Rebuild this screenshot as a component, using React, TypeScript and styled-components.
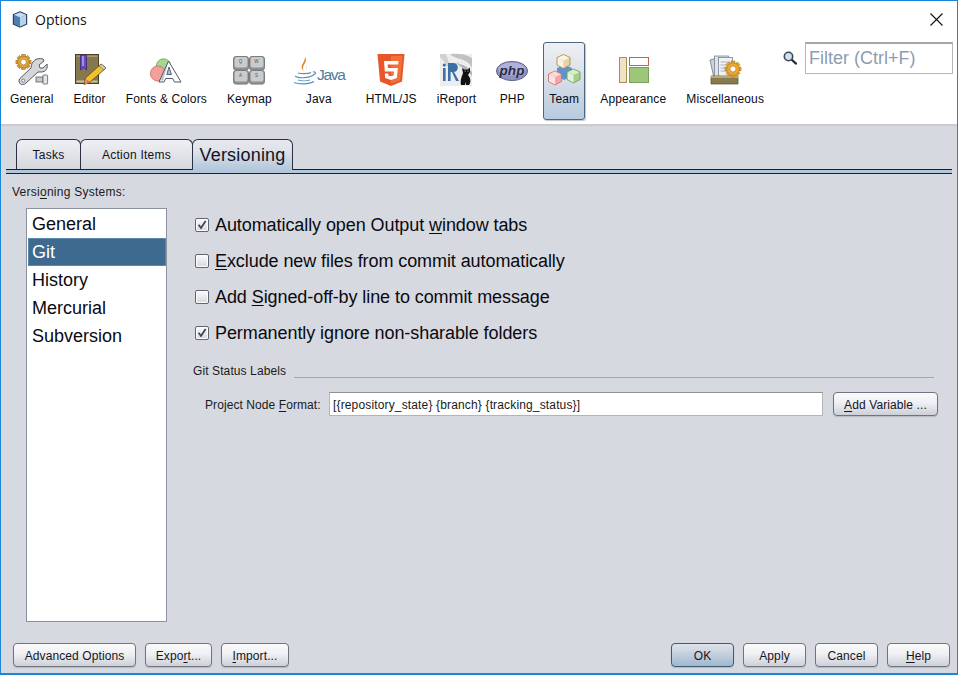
import React from "react";
import styled, { createGlobalStyle } from "styled-components";

const Global = createGlobalStyle`
  html, body { margin: 0; padding: 0; background: #fff; }
  * { box-sizing: border-box; }
`;

const Win = styled.div`
  width: 958px; height: 675px; display: flex; flex-direction: column;
  border: 1px solid #1a86d9; border-width: 1px 1px 2px 1px;
  background: #fff; font-family: "Liberation Sans", Arial, sans-serif; color: #111;
  overflow: hidden;
`;
const TitleBar = styled.div`
  height: 37px; display: flex; align-items: center; padding: 0 14px 0 11px; gap: 7px; flex: none;
`;
const TitleText = styled.div`
  font-family: "Open Sans", sans-serif; font-size: 14px; color: #111; flex: 1; padding-bottom: 1px;
`;
const Toolbar = styled.div`
  height: 88px; display: flex; align-items: flex-start; padding: 4px 4px 0 4px; gap: 10px; flex: none;
  border-bottom: 2px solid #c9cbce;
`;
const ToolItem = styled.div<{ $active?: boolean }>`
  height: 78px; padding: 11px 4px 0; display: flex; flex-direction: column; align-items: center;
  border: 1px solid ${(p) => (p.$active ? "#4c6580" : "transparent")};
  border-radius: 3px; font-size: 12px; letter-spacing: 0.13px; white-space: nowrap;
  background: ${(p) => (p.$active ? "linear-gradient(#eef0f3, #dfe3ea 35%, #b7cbe0)" : "transparent")};
  box-shadow: ${(p) => (p.$active ? "1px 1px 1px #c4c6ca" : "none")};
`;
const IconSlot = styled.div<{ $w?: number }>`
  width: ${(p) => p.$w ?? 32}px; height: 32px; margin-bottom: 6px; display: flex; justify-content: center;
`;
const ToolLabel = styled.div`
  line-height: 14px; color: #0c0c14;
`;
const Filter = styled.div`
  display: flex; align-items: flex-start; gap: 8px; margin-left: auto;
`;
const SearchGlyph = styled.div`padding-top: 9px;`;
const FilterBox = styled.div`
  width: 148px; height: 32px; border: 1px solid #b4b6b8; border-top: 2px solid #a4a6a8;
  font-size: 18px; color: #8d9cb0; line-height: 28px; padding-left: 3px; background: #fff;
  white-space: nowrap;
`;
const Content = styled.div`
  flex: 1; min-height: 0; background: #d6d9e0; display: flex; flex-direction: column;
`;
const TabStrip = styled.div`
  margin: 13px 5px 0 5px; padding-left: 10px; height: 31px; display: flex; align-items: flex-start;
  border-bottom: 1px solid #16203a; flex: none;
`;
const TabRule = styled.div`
  margin: 0 5px 0 5px; height: 4px; background: #b3c7dc; border-bottom: 1px solid #16203a; flex: none;
`;
const Tab = styled.div<{ $active?: boolean; $w: number }>`
  width: ${(p) => p.$w}px; height: ${(p) => (p.$active ? 31 : 30)}px; flex: none;
  display: flex; justify-content: center; align-items: center;
  border: 1px solid #2a3142; border-bottom: none;
  border-radius: 6px 6px 0 0; position: relative; z-index: ${(p) => (p.$active ? 1 : 0)};
  margin-right: ${(p) => (p.$active ? 0 : -1)}px; padding-top: 1px;
  font-size: ${(p) => (p.$active ? 18 : 12)}px;
  letter-spacing: ${(p) => (p.$active ? 0.2 : 0.25)}px;
  color: #11131e;
  background: ${(p) =>
    p.$active ? "linear-gradient(#e6e8ed, #dfe2e8 35%, #b3c7dc 100%)" : "linear-gradient(#eff0f3, #d4d7de)"};
`;
const Body = styled.div`
  flex: 1; min-height: 0; display: flex; flex-direction: column; padding: 11px 7px 0 11px;
`;
const SysLabel = styled.div`
  font-size: 12px; line-height: 14px; color: #1a1a22; letter-spacing: 0.25px;
`;
const Split = styled.div`
  flex: 1; min-height: 0; display: flex; padding-top: 9px;
`;
const ListBox = styled.div`
  width: 141px; height: 414px; margin-left: 14px; flex: none; background: #fff;
  border: 1px solid #8b92a2; padding: 1px 0 1px 1px;
`;
const ListItem = styled.div<{ $sel?: boolean }>`
  height: 28px; padding-left: 4px; font-size: 18px; line-height: 28px;
  color: ${(p) => (p.$sel ? "#fff" : "#0a0a10")};
  background: ${(p) => (p.$sel ? "#3d6a8e" : "transparent")};
  box-shadow: ${(p) => (p.$sel ? "inset 0 0 0 1px #5d88ad" : "none")};
`;
const Settings = styled.div`
  flex: 1; display: flex; flex-direction: column; padding: 0 0 0 26px; margin-top: -1px;
`;
const CheckRow = styled.div`
  height: 36px; display: flex; align-items: center; gap: 6px; font-size: 18px; color: #0a0a10; letter-spacing: -0.08px;
`;
const CheckBox = styled.div`
  width: 14px; height: 14px; border: 1px solid #5f6470; border-radius: 2px; flex: none; margin-left: 2px;
  background: linear-gradient(#fbfbfc, #d5d8de); box-shadow: inset 0 0 0 1px #fff;
  display: flex; align-items: center; justify-content: center;
`;
const Mn = styled.span`
  text-decoration: underline; text-underline-offset: 2px;
`;
const GroupHead = styled.div`
  display: flex; align-items: flex-start; gap: 8px; margin-top: 13px; font-size: 12px; color: #1a1a22;
  line-height: 14px; letter-spacing: 0.1px;
`;
const GroupLine = styled.div`
  flex: 1; height: 1px; background: #a3a7b0; margin: 13px 16px 0 0;
`;
const FormatRow = styled.div`
  display: flex; align-items: center; margin-top: 14px; padding-left: 12px; font-size: 12px;
`;
const FieldLabel = styled.div`
  width: 124px; flex: none; color: #1a1a22; letter-spacing: 0.08px; white-space: nowrap; padding-top: 1px;
`;
const Field = styled.div`
  width: 494px; height: 24px; background: #fff; border: 1px solid #b2b4b6; border-top-color: #8f9193;
  line-height: 24px; padding-left: 3px; color: #1a1a22; letter-spacing: 0.15px; font-size: 12px;
`;
const Btn = styled.div<{ $w: number; $primary?: boolean }>`
  width: ${(p) => p.$w}px; height: 24px; flex: none; display: flex; align-items: center; justify-content: center;
  font-size: 12px; color: #16161e; letter-spacing: 0.1px; padding-top: 1px;
  border: 1px solid ${(p) => (p.$primary ? "#3d5a76" : "#6f7480")}; border-radius: 4px;
  background: ${(p) =>
    p.$primary ? "linear-gradient(#dfe3ea, #c4d0de 45%, #9fb8d0)" : "linear-gradient(#fafafb, #eef0f3 45%, #cdd0d7)"};
  box-shadow: 0 1px 1px #b6b9c0;
`;
const AddBtn = styled(Btn)`margin-left: 10px;`;
const Footer = styled.div`
  height: 30px; flex: none; display: flex; justify-content: space-between; padding: 0 0 0 1px;
`;
const BtnGroup = styled.div`
  display: flex; gap: 9px;
`;

const Cube = ({ x, y, c, d, l }: { x: number; y: number; c: string; d: string; l: string }) => (
  <g transform={`translate(${x} ${y})`}>
    <path d="M6.5 0 L13 3 L13 10.5 L6.5 14 L0 10.5 L0 3 Z" fill={c} stroke={d} strokeWidth="0.9" />
    <path d="M6.5 .6 L12.4 3.2 L6.5 6 L.6 3.2 Z" fill={l} />
    <path d="M.6 3.4 L6.5 6.2 L6.5 13.4 L.6 10.2 Z" fill="#fff" opacity="0.7" />
  </g>
);

const GearPath = ({ cx, cy, r, fill, stroke }: { cx: number; cy: number; r: number; fill: string; stroke: string }) => (
  <g>
    {[0, 45, 90, 135].map((a) => (
      <rect key={a} x={cx - r * 0.28} y={cy - r * 1.18} width={r * 0.56} height={r * 2.36} fill={fill} stroke={stroke} strokeWidth="0.5" transform={`rotate(${a} ${cx} ${cy})`} />
    ))}
    <circle cx={cx} cy={cy} r={r * 0.92} fill={fill} stroke={stroke} strokeWidth="0.6" />
    <circle cx={cx} cy={cy} r={r * 0.45} fill="#fff" stroke={stroke} strokeWidth="0.6" />
  </g>
);

const Svg32 = styled.svg`width: 32px; height: 32px; display: block; overflow: visible;`;
const SvgOptions = styled.svg`display: block; flex: none;`;
const SvgJava = styled.svg`display: block; overflow: visible;`;
const SvgSearch = styled.svg`display: block;`;

const IconOptions = () => (
  <SvgOptions width="16" height="17" viewBox="0 0 16 17">
    <path d="M8 .8 L14.6 3.6 V13 L8 16.2 L1.4 13 V3.6 Z" fill="#6f9fcf" stroke="#31425c" strokeWidth="1.2" />
    <path d="M8 1.6 L14 3.8 L8 6.4 L2 3.8 Z" fill="#c6dcf1" />
    <path d="M8 6.6 L14 4 V12.7 L8 15.4 Z" fill="#b8d2ea" />
    <path d="M8 6.6 L2 4 V12.7 L8 15.4 Z" fill="#4b7fb5" />
  </SvgOptions>
);
const IconClose = () => (
  <svg width="13" height="13" viewBox="0 0 13 13"><path d="M.5 .5 L12.5 12.5 M12.5 .5 L.5 12.5" stroke="#111" strokeWidth="1.1" /></svg>
);
const IconGeneral = () => (
  <Svg32 viewBox="0 0 32 32">
    <GearPath cx={7.5} cy={8} r={6.4} fill="#e0a63c" stroke="#8c6420" />
    <path d="M28 7 L23 11 L24 14 L27 14 L31 10 C32 14 30 18 25 18 L22 18 L10 29 C8 31 5 31 3.6 29 C2.4 27 3 25 5 23.5 L15 14 C15 8 20 3 27 5 Z" fill="#d4d6da" stroke="#55595f" strokeWidth="1" />
    <circle cx="7.2" cy="26.6" r="1.5" fill="#fff" stroke="#55595f" strokeWidth=".7" />
    <rect x="20" y="23" width="7" height="5" fill="#c6c9cd" stroke="#5a5f66" strokeWidth=".8" />
    <rect x="27" y="21" width="4.6" height="9" rx=".6" fill="#e3e5e8" stroke="#5a5f66" strokeWidth=".8" />
  </Svg32>
);
const IconEditor = () => (
  <Svg32 viewBox="0 0 32 32">
    <rect x="1.5" y=".5" width="23" height="29" fill="#85784f" stroke="#4a4026" />
    <rect x="2.5" y="1.5" width="21" height="1.5" fill="#a79a72" />
    <rect x="2.5" y="26.5" width="21" height="2" fill="#c9c2a6" />
    <path d="M6.5 1 H12.5 V16 L9.5 13.5 L6.5 16 Z" fill="#6c4bc0" stroke="#3a2580" strokeWidth=".8" />
    <path d="M8 2 H10 V12 H8 Z" fill="#a48be4" />
    <path d="M27 10 L32 14 L16 28 L10 30.5 L11.5 24 Z" fill="#f0c230" stroke="#6a5318" strokeWidth=".9" />
    <path d="M27 10 L32 14 L30 16 L25 12 Z" fill="#cfd0d2" stroke="#6a5318" strokeWidth=".6" />
    <path d="M13 25.5 L16 28 L10.5 31 Z" fill="#e66a7c" />
  </Svg32>
);
const IconFonts = () => (
  <Svg32 viewBox="0 0 32 32">
    <circle cx="13.5" cy="12" r="7.2" fill="#a5d98f" stroke="#6d9f5b" strokeWidth=".8" />
    <circle cx="8" cy="19.5" r="7.6" fill="#f4a09a" stroke="#bb6a66" strokeWidth=".8" />
    <path d="M18.5 7 L31 28 H24.5 L22.6 24.5 H15.6 L14 28 H9 Z" fill="#fff" stroke="#3a4658" strokeWidth=".9" />
    <path d="M19 13 L16.8 20.5 H21.4 Z" fill="#9cc4e4" stroke="#3a4658" strokeWidth=".8" />
    <path d="M18 8.5 L13 26.5 H10.6 Z" fill="#5f6e86" opacity=".45" />
  </Svg32>
);
const KeyCap = styled.text`
  font-family: "Liberation Sans", sans-serif; font-size: 4.5px; fill: #555;
`;
const Key = ({ x, y, t }: { x: number; y: number; t: string }) => (
  <g transform={`translate(${x} ${y})`}>
    <rect x=".5" y=".5" width="15" height="13.6" rx="2.4" fill="#8f9295" stroke="#7a7d80" />
    <rect x="1.6" y="1" width="12.8" height="10.6" rx="2" fill="#c9cbcd" />
    <KeyCap x="7.5" y="7.4" textAnchor="middle">{t}</KeyCap>
  </g>
);
const IconKeymap = () => (
  <Svg32 viewBox="0 0 32 32">
    <Key x={0} y={2} t="Q" /><Key x={16} y={2} t="W" /><Key x={0} y={16} t="A" /><Key x={16} y={16} t="S" />
  </Svg32>
);
const JavaWord = styled.text`
  font-family: "Liberation Sans", sans-serif; font-size: 15.5px; fill: #4e7c9e;
`;
const IconJava = () => (
  <SvgJava width="54" height="32" viewBox="0 0 54 32">
    <path d="M13 3 C17 8 8 12 12 17 C6 13 13 9 13 3 Z" fill="#e3872e" />
    <path d="M18 8 C15 10 13 13 15 17 C13.5 13 15 10 18 8 Z" fill="#e3872e" />
    <path d="M6 19 C9 20 16 20 19 18.5 M3 22 C6 24.5 18 24.5 22 20.5 C25 19 23 17.5 21 18 M6 26 C9 27 15 27 18 26 M2 28.5 C7 30.5 17 30.5 22 27.5" fill="none" stroke="#5d91ba" strokeWidth="1.2" />
    <JavaWord x="25" y="26" textLength="29">Java</JavaWord>
  </SvgJava>
);
const IconHtml = () => (
  <Svg32 viewBox="0 0 32 32">
    <path d="M2.5 0 H29.5 L27 27.5 L16 32 L5 27.5 Z" fill="#e9562a" />
    <path d="M16 2 H27.4 L25.2 26.2 L16 29.8 Z" fill="#f2703a" />
    <path d="M9 7 H23.5 L23.1 10.6 H12.6 L13 14 H22.8 L21.9 24 L16 26 L10.2 24 L9.8 19.5 H13.2 L13.4 21.4 L16 22.2 L18.6 21.4 L19 17.4 H9.8 Z" fill="#fff" />
  </Svg32>
);
const IconIReport = () => (
  <Svg32 viewBox="0 0 32 32">
    <rect width="32" height="32" fill="#eceded" />
    <path d="M10 0 C16 6 28 4 32 14 V4 C26 0 18 -1 10 0 Z" fill="#bfc1c3" />
    <path d="M0 3 C6 8 8 16 14 20 C10 12 8 6 6 0 H0 Z" fill="#d0d1d3" />
    <path d="M16 8 C22 12 26 10 32 18 V22 C26 14 20 14 16 8 Z" fill="#b2b4b6" />
    <rect x="3" y="14" width="2.6" height="13" fill="#3c6fa6" />
    <circle cx="4.3" cy="11" r="1.6" fill="#3c6fa6" />
    <path d="M8 27 V9 H14 C19 9 19 18 14 18 L19 27 H16 L12 18 H10.6 V27 Z" fill="#3c6fa6" />
    <path d="M21 31 C20 26 22 22 23 19 L22 14 L24.5 15.5 L28 15.5 L30 13.5 L30 18 L28 21 C31 24 31 29 29 31 H26 L26 28 L25 31 Z" fill="#111" />
    <circle cx="25.2" cy="17" r=".6" fill="#e8d040" /><circle cx="28" cy="17" r=".6" fill="#e8d040" />
  </Svg32>
);
const PhpWord = styled.text`
  font-family: "Liberation Sans", sans-serif; font-size: 13.5px; font-weight: 700; font-style: italic; fill: #2e2e48;
`;
const IconPhp = () => (
  <Svg32 viewBox="0 0 32 32">
    <ellipse cx="16" cy="17" rx="15.6" ry="9.6" fill="#8f92c4" stroke="#4f5278" strokeWidth=".8" />
    <ellipse cx="16" cy="15" rx="13.5" ry="6.5" fill="#aeb1d8" />
    <PhpWord x="16" y="21" textAnchor="middle">php</PhpWord>
  </Svg32>
);
const IconTeam = () => (
  <Svg32 viewBox="0 0 32 32">
    <path d="M9 14 L17 11 L24 14 L24 22 L16 26 L9 22 Z" fill="#5f93cf" />
    <Cube x={9} y={0.5} c="#e6d3a6" d="#a58a55" l="#fbf3dd" />
    <Cube x={0.5} y={17} c="#f6a6a0" d="#c97670" l="#fdd9d6" />
    <Cube x={19} y={15} c="#a3d18a" d="#6ea059" l="#d6efc9" />
  </Svg32>
);
const IconAppearance = () => (
  <Svg32 viewBox="0 0 32 32">
    <rect x="2.5" y="3.5" width="7" height="25" fill="#efe3c6" stroke="#a98f55" />
    <rect x="12.5" y="3.5" width="19" height="8" fill="#fff" stroke="#c0625a" />
    <rect x="12.5" y="13.5" width="19" height="15" fill="#9dc67a" stroke="#7a9f5c" />
  </Svg32>
);
const IconMisc = () => (
  <Svg32 viewBox="0 0 32 32">
    <path d="M1 6 L8 4 L12 22 L5 24 Z" fill="#cdd3dd" stroke="#5d6470" strokeWidth=".7" />
    <rect x="5.5" y="2" width="14" height="21" fill="#dfe4ec" stroke="#6d7480" strokeWidth=".7" />
    <rect x="9.5" y="3.5" width="14" height="21" fill="#eef1f5" stroke="#6d7480" strokeWidth=".7" />
    <path d="M11.5 8 H21 M11.5 11 H21 M11.5 14 H18 M11.5 17 H18" stroke="#9ea6b4" strokeWidth=".8" />
    <path d="M2 22 H29 V30 H2 Z" fill="#8a7a50" stroke="#55492c" strokeWidth=".7" />
    <path d="M2 22 H29 V24 H2 Z" fill="#b7a87c" />
    <GearPath cx={24} cy={15} r={6.8} fill="#eeaa30" stroke="#a06a14" />
  </Svg32>
);
const IconSearch = () => (
  <SvgSearch width="14" height="14" viewBox="0 0 14 14">
    <path d="M8.5 8.5 L13 12.6" stroke="#2a2a2a" strokeWidth="2.2" strokeLinecap="round" />
    <circle cx="5.5" cy="5.5" r="4.2" fill="#cfe0ee" stroke="#3e4a58" strokeWidth="1.6" />
  </SvgSearch>
);
const Tick = () => (
  <svg width="10" height="10" viewBox="0 0 10 10"><path d="M1.6 4.8 L4 8 L8.6 1" fill="none" stroke="#3d4657" strokeWidth="1.8" /></svg>
);

const tools: { label: string; icon: React.ReactNode; w?: number; active?: boolean }[] = [
  { label: "General", icon: <IconGeneral /> },
  { label: "Editor", icon: <IconEditor /> },
  { label: "Fonts & Colors", icon: <IconFonts /> },
  { label: "Keymap", icon: <IconKeymap /> },
  { label: "Java", icon: <IconJava />, w: 54 },
  { label: "HTML/JS", icon: <IconHtml /> },
  { label: "iReport", icon: <IconIReport /> },
  { label: "PHP", icon: <IconPhp /> },
  { label: "Team", icon: <IconTeam />, active: true },
  { label: "Appearance", icon: <IconAppearance /> },
  { label: "Miscellaneous", icon: <IconMisc /> },
];

export default function App() {
  return (
    <Win>
      <Global />
      <TitleBar>
        <IconOptions />
        <TitleText>Options</TitleText>
        <IconClose />
      </TitleBar>
      <Toolbar>
        {tools.map((t) => (
          <ToolItem key={t.label} $active={t.active}>
            <IconSlot $w={t.w}>{t.icon}</IconSlot>
            <ToolLabel>{t.label}</ToolLabel>
          </ToolItem>
        ))}
        <Filter>
          <SearchGlyph><IconSearch /></SearchGlyph>
          <FilterBox>Filter (Ctrl+F)</FilterBox>
        </Filter>
      </Toolbar>
      <Content>
        <TabStrip>
          <Tab $w={65}>Tasks</Tab>
          <Tab $w={113}>Action Items</Tab>
          <Tab $w={101} $active>Versioning</Tab>
        </TabStrip>
        <TabRule />
        <Body>
          <SysLabel>Versi<Mn>o</Mn>ning Systems:</SysLabel>
          <Split>
            <ListBox>
              <ListItem>General</ListItem>
              <ListItem $sel>Git</ListItem>
              <ListItem>History</ListItem>
              <ListItem>Mercurial</ListItem>
              <ListItem>Subversion</ListItem>
            </ListBox>
            <Settings>
              <CheckRow><CheckBox><Tick /></CheckBox><span>Automatically open Output <Mn>w</Mn>indow tabs</span></CheckRow>
              <CheckRow><CheckBox /><span><Mn>E</Mn>xclude new files from commit automatically</span></CheckRow>
              <CheckRow><CheckBox /><span>Add <Mn>S</Mn>igned-off-by line to commit message</span></CheckRow>
              <CheckRow><CheckBox><Tick /></CheckBox><span>Permanently i<Mn>g</Mn>nore non-sharable folders</span></CheckRow>
              <GroupHead>Git Status Labels<GroupLine /></GroupHead>
              <FormatRow>
                <FieldLabel>Project Node <Mn>F</Mn>ormat:</FieldLabel>
                <Field>[{"{repository_state}"} {"{branch}"} {"{tracking_status}"}]</Field>
                <AddBtn $w={105}><span><Mn>A</Mn>dd Variable ...</span></AddBtn>
              </FormatRow>
            </Settings>
          </Split>
          <Footer>
            <BtnGroup>
              <Btn $w={123}>Advanced Options</Btn>
              <Btn $w={67}><span>Expo<Mn>r</Mn>t...</span></Btn>
              <Btn $w={68}><span><Mn>I</Mn>mport...</span></Btn>
            </BtnGroup>
            <BtnGroup>
              <Btn $w={63} $primary>OK</Btn>
              <Btn $w={63}>Apply</Btn>
              <Btn $w={63}>Cancel</Btn>
              <Btn $w={63}><span><Mn>H</Mn>elp</span></Btn>
            </BtnGroup>
          </Footer>
        </Body>
      </Content>
    </Win>
  );
}
